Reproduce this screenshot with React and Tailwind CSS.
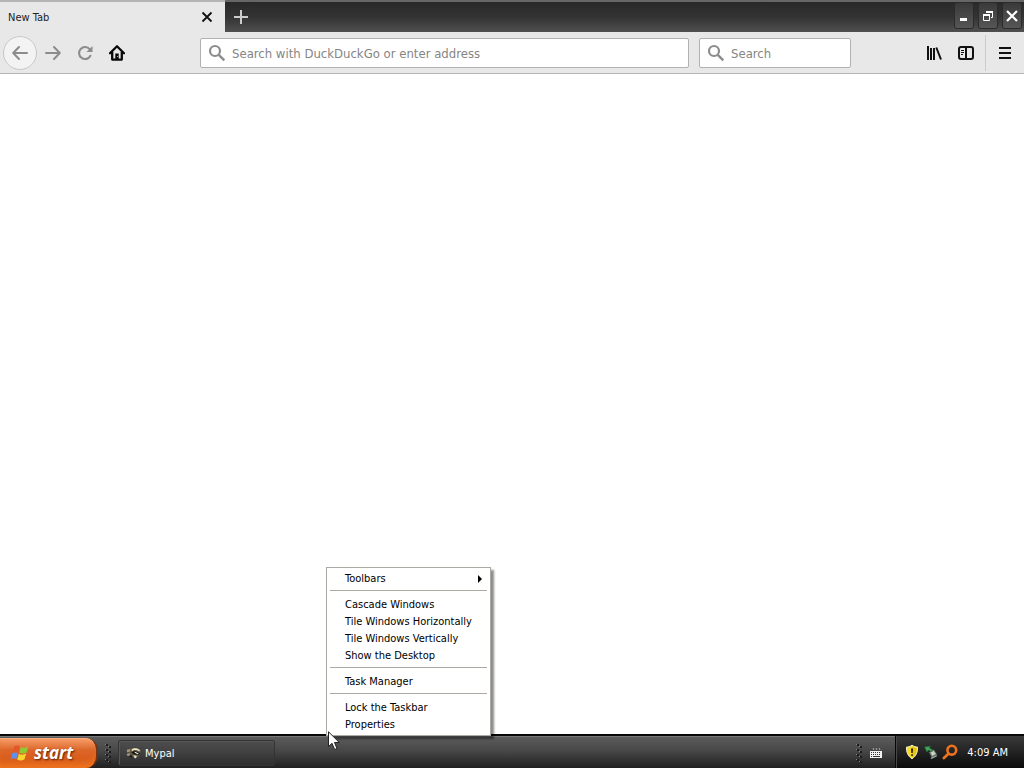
import React from "react";

const ui = "font-['DejaVu_Sans_Condensed','DejaVu_Sans',sans-serif]";

function SearchIcon() {
  return (
    <svg className="h-[18px] w-[18px] shrink-0" viewBox="0 0 18 18" fill="none" stroke="#8c8c8c" aria-hidden="true">
      <circle cx="7" cy="7" r="5" strokeWidth="2.2" />
      <path d="M10.8 10.8L16.3 16.3" strokeWidth="2.4" />
    </svg>
  );
}

function TabStrip() {
  const winBtn =
    "flex h-[27px] w-5 items-center justify-center rounded-[3px] border border-[#2c2c2c] bg-linear-to-b from-[#3a3a3a] to-[#565656]";
  return (
    <header className="flex h-8 items-stretch border-t-2 border-[#666] bg-linear-to-b from-[#292929] via-[#333] to-[#505050]">
      <div className="-mt-0.5 flex w-[225px] items-center justify-between border-t-2 border-[#b4b4b4] bg-[#e8e8e8] pl-2 pr-2.5">
        <span className="pt-0.5 text-[11px] text-[#222]">New Tab</span>
        <button type="button" aria-label="Close tab" className="flex h-4 w-4 items-center justify-center">
          <svg className="h-3 w-3" viewBox="0 0 12 12" stroke="#111" strokeWidth="1.8" aria-hidden="true">
            <path d="M1.5 1.5L10.5 10.5M10.5 1.5L1.5 10.5" />
          </svg>
        </button>
      </div>
      <button type="button" aria-label="New tab" className="flex w-8 items-center justify-center">
        <svg className="h-4 w-4" viewBox="0 0 16 16" stroke="#ccc" strokeWidth="2" aria-hidden="true">
          <path d="M8 1V15M1 8H15" />
        </svg>
      </button>
      <div className="ml-auto flex items-start gap-1 pr-0.5">
        <button type="button" aria-label="Minimize" className={winBtn}>
          <svg className="h-4 w-4 shrink-0" viewBox="0 0 16 16" aria-hidden="true">
            <path d="M4 10H11V13H4Z" fill="#fff" />
          </svg>
        </button>
        <button type="button" aria-label="Restore" className={winBtn}>
          <svg className="h-4 w-4 shrink-0" viewBox="0 0 16 16" fill="none" stroke="#fff" aria-hidden="true">
            <path d="M3.5 6.5H9.5V12.5H3.5ZM6.5 5V3.5H12.5V9.5H11" />
            <path d="M3 7H10M6 4H13" strokeWidth="2" />
          </svg>
        </button>
        <button type="button" aria-label="Close" className={winBtn}>
          <svg className="h-4 w-4 shrink-0" viewBox="0 0 16 16" stroke="#fff" strokeWidth="2.2" aria-hidden="true">
            <path d="M3 3L13 13M13 3L3 13" />
          </svg>
        </button>
      </div>
    </header>
  );
}

function Toolbar() {
  const btn = "flex h-8 w-8 shrink-0 items-center justify-center";
  const field = "flex h-[30px] items-center gap-1.5 rounded-[2px] border border-[#b1b1b1] bg-white pl-[7px]";
  const input = "min-w-0 flex-1 bg-transparent pt-0.5 text-[13px] text-[#444] outline-none placeholder:text-[#858585]";
  return (
    <nav className="flex h-[42px] items-center border-b border-[#b5b5b5] bg-[#e8e8e8] pl-[3px]">
      <button
        type="button"
        aria-label="Back"
        className="flex h-[34px] w-[34px] shrink-0 items-center justify-center rounded-full border border-[#c8c8c8] bg-[#f3f3f3]"
      >
        <svg className="h-4 w-4 shrink-0" viewBox="0 0 16 16" fill="none" stroke="#8c8c8c" strokeWidth="2" strokeLinecap="round" strokeLinejoin="round" aria-hidden="true">
          <path d="M15 8H1.5M7 2L1.2 8L7 14" />
        </svg>
      </button>
      <button type="button" aria-label="Forward" className={btn}>
        <svg className="h-4 w-4" viewBox="0 0 16 16" fill="none" stroke="#8c8c8c" strokeWidth="2" strokeLinecap="round" strokeLinejoin="round" aria-hidden="true">
          <path d="M1 8H14.5M9 2L14.8 8L9 14" />
        </svg>
      </button>
      <button type="button" aria-label="Reload" className={btn}>
        <svg className="h-4 w-4" viewBox="0 0 16 16" fill="none" aria-hidden="true">
          <path d="M12.7 4.2A6 6 0 1 0 13.4 10.8" stroke="#8c8c8c" strokeWidth="2.1" strokeLinecap="round" />
          <path d="M15.5 1V7H9.5Z" fill="#8c8c8c" />
        </svg>
      </button>
      <button type="button" aria-label="Home" className={btn}>
        <svg className="h-4 w-4" viewBox="0 0 16 16" fill="none" stroke="#080808" aria-hidden="true">
          <path d="M1 8.3L8 1.3L15 8.3" strokeWidth="2.3" strokeLinecap="round" strokeLinejoin="round" />
          <path d="M3.2 7V14.6H12.8V7" strokeWidth="2.3" strokeLinejoin="round" />
          <path d="M6.3 14V8.5H9.7V14Z" fill="#080808" stroke="none" />
          <path d="M8.2 11H9V12H8.2Z" fill="#ddd" stroke="none" />
        </svg>
      </button>
      <div className="mx-[67px] flex flex-1 gap-2.5">
        <div className={field + " flex-1"}>
          <SearchIcon />
          <input aria-label="Address" className={input} placeholder="Search with DuckDuckGo or enter address" />
        </div>
        <div className={field + " w-[152px]"}>
          <SearchIcon />
          <input aria-label="Search" className={input} placeholder="Search" />
        </div>
      </div>
      <button type="button" aria-label="Library" className={btn}>
        <svg className="h-4 w-4" viewBox="0 0 16 16" stroke="#111" strokeWidth="2" aria-hidden="true">
          <path d="M2 1V15M5 3V15M8 3V15M10.3 2.5L15 14.5" />
        </svg>
      </button>
      <button type="button" aria-label="Sidebar" className={btn}>
        <svg className="h-4 w-4" viewBox="0 0 16 16" fill="none" stroke="#111" aria-hidden="true">
          <rect x="1" y="2" width="14" height="12" rx="2" strokeWidth="2" />
          <path d="M8 2V14" strokeWidth="2" />
          <path d="M3 5.5H6M3 7.5H6M3 9.5H5" strokeWidth="1" />
        </svg>
      </button>
      <div className="ml-[3px] flex border-l border-[#cbcbcb] py-0.5 pl-[3px] pr-[3px]">
        <button type="button" aria-label="Open menu" className={btn}>
          <svg className="h-4 w-4" viewBox="0 0 16 16" stroke="#111" strokeWidth="2" aria-hidden="true">
            <path d="M2 3H14M2 8H14M2 13H14" />
          </svg>
        </button>
      </div>
    </nav>
  );
}

const groups = [
  ["Toolbars"],
  ["Cascade Windows", "Tile Windows Horizontally", "Tile Windows Vertically", "Show the Desktop"],
  ["Task Manager"],
  ["Lock the Taskbar", "Properties"],
];

function ContextMenu() {
  return (
    <div
      role="menu"
      className="absolute bottom-8 left-[326px] w-[165px] border border-[#aca8a4] bg-white p-0.5 shadow-[3px_3px_2px_rgba(0,0,0,0.45)]"
    >
      {groups.map((items, i) => (
        <div key={items[0]}>
          {i > 0 && <div role="separator" className="mx-px mt-[3px] mb-[5px] h-px bg-[#aca8a4]" />}
          {items.map((label) => (
            <button
              key={label}
              type="button"
              role="menuitem"
              className="flex h-[17px] w-full items-center justify-between whitespace-nowrap pl-4 pr-1.5 text-[11px] text-black"
            >
              <span className="pt-0.5">{label}</span>
              {label === "Toolbars" && (
                <svg className="h-2 w-1" viewBox="0 0 4 8" aria-hidden="true">
                  <path d="M0 0L4 4L0 8Z" fill="#000" />
                </svg>
              )}
            </button>
          ))}
        </div>
      ))}
    </div>
  );
}

function Cursor() {
  return (
    <svg className="absolute bottom-[17px] left-[328px] h-5 w-3" viewBox="0 0 12 20" aria-hidden="true">
      <path d="M0.5 0.8V15.5L4 12.3L6.6 18.5L9 17.5L6.5 11.5H11.3Z" fill="#fff" stroke="#222" />
    </svg>
  );
}

function Grip() {
  return (
    <svg className="h-6 w-2 shrink-0" viewBox="0 0 8 24" aria-hidden="true">
      {[3, 8, 13, 18].map((y) => (
        <g key={y}>
          <path d={`M2 ${y}h2v2h-2zM5 ${y + 2}h2v2h-2z`} fill="#1c1c1c" />
          <path d={`M1 ${y}h1v1h-1zM4 ${y + 2}h1v1h-1z`} fill="#858585" />
        </g>
      ))}
    </svg>
  );
}

function Flag() {
  return (
    <svg className="h-[18px] w-5 shrink-0" viewBox="0 0 20 18" aria-hidden="true">
      <path d="M4.2 2.4C6 1.1 8 1.3 9.8 2.5L8.1 8.4C6.3 7.2 4.4 7.3 2.6 8.3Z" fill="#e4562c" />
      <path d="M10.8 3C12.8 4.2 15 4.1 18.3 2.5L16.5 8.4C14 9.9 11.4 9.8 9.2 8.8Z" fill="#8ccb35" />
      <path d="M2.3 9.2C4.2 8.2 6.2 8.2 7.9 9.4L6.2 15.2C4.2 14.1 2.3 14.1 0.5 15.1Z" fill="#5f8ff0" />
      <path d="M8.9 9.8C11.1 11.1 13.8 10.9 16.2 9.5L14.5 15.3C11.9 16.9 9.4 16.7 7.2 15.6Z" fill="#f6d52f" />
    </svg>
  );
}

function Tray() {
  return (
    <div className="flex items-center gap-[3px] border-l border-[#070707] bg-linear-to-b from-[#3a3a3a] from-0% via-[#222] via-50% to-[#0b0b0b] pl-2 pr-4 shadow-[inset_1px_0_#484848]">
      <svg className="h-4 w-4" viewBox="0 0 16 16" aria-label="Security alert" role="img">
        <path d="M8 1.2C10 2.5 11.5 3 13.5 3.1C13.8 8 12.2 12 8 14.8C3.8 12 2.2 8 2.5 3.1C4.5 3 6 2.5 8 1.2Z" fill="#f7dc2b" stroke="#f6f1cf" />
        <path d="M8 2.4V13.8C11.5 11.2 12.8 7.8 12.8 4C11 3.8 9.5 3.4 8 2.4Z" fill="#d9a900" opacity="0.5" />
        <path d="M7 4.4H9L8.7 9H7.3ZM7.2 10.3H8.8V12H7.2Z" fill="#252000" />
      </svg>
      <svg className="h-4 w-4" viewBox="0 0 16 16" aria-label="Safely remove hardware" role="img">
        <path d="M5.5 8L11 5L14.5 10.5L8.5 13.8Z" fill="#788377" stroke="#222c25" />
        <path d="M7.7 8.5L10.6 6.9L12.6 10L9.3 11.8Z" fill="#ccd5cb" />
        <path d="M1.5 3L7.5 2.2L6.5 4L9.8 6L8.4 7.6L5.2 6L4 8Z" fill="#42a55a" stroke="#216436" strokeWidth="0.6" />
        <path d="M7.5 14L13.5 11L14 12.3L8.5 15Z" fill="#a7b0a9" />
      </svg>
      <svg className="h-4 w-4" viewBox="0 0 16 16" fill="none" aria-label="Search" role="img">
        <circle cx="9.8" cy="6.2" r="4.4" stroke="#ef731e" strokeWidth="2.6" />
        <path d="M6.4 9.8L1.9 14" stroke="#ef731e" strokeWidth="2.8" strokeLinecap="round" />
      </svg>
      <time className="ml-1.5 whitespace-nowrap pt-0.5 text-[11px] text-white">4:09 AM</time>
    </div>
  );
}

function Taskbar() {
  return (
    <footer className="flex h-[34px] items-stretch border-t-2 border-[#080808] bg-linear-to-b from-[#5e5e5e] via-[#454545] via-50% to-[#202020] pt-0.5 shadow-[inset_0_1px_#777]">
      <button
        type="button"
        className="flex w-[98px] items-center gap-1 rounded-r-xl border-r-2 border-[#78320f] bg-linear-to-b from-[#f9a06b] from-0% via-[#dc6629] via-40% to-[#d45308] pl-2.5 shadow-[inset_0_1px_#ffae7b,inset_0_-8px_6px_-3px_#ee7522]"
      >
        <Flag />
        <span className="font-['Open_Sans','Noto_Sans',sans-serif] text-[17px] font-bold italic leading-5 text-white [text-shadow:1px_1px_2px_#5a2105]">
          start
        </span>
      </button>
      <div className="flex items-center px-1.5">
        <Grip />
      </div>
      <button
        type="button"
        className="mt-0.5 mb-0.5 flex w-[157px] items-center gap-[3px] rounded-[2px] border border-[#343434] bg-linear-to-b from-[#4e4e4e] via-[#404040] to-[#2e2e2e] pl-[7px] text-[11px] text-white shadow-[inset_1px_1px_#565656]"
      >
        <svg className="h-4 w-4" viewBox="0 0 16 16" aria-hidden="true">
          <path d="M1.5 6.5C3 3 8.5 1.5 12.5 4.5L15 5.5L13.5 10.5C11 13.5 7.5 13 5 10Z" fill="#5d5647" />
          <path d="M0.8 4.8L4 4L4.2 6.5L1 7.5ZM0.5 9L3.5 8L4.2 10L1.8 11.3Z" fill="#a59673" />
          <path d="M5.5 4.6C8 2.4 11.3 3 14 5L13.4 6.4C10.5 4.6 7.8 4.8 6 6.2Z" fill="#eee4c4" />
          <path d="M5.5 7.6L8.6 5.8L14.2 8.2L13 9.8L8.3 9.4Z" fill="#11120f" />
          <path d="M8.6 6.6L12.8 8.6L11.6 9.2L8.6 7.8Z" fill="#f0e8cf" />
          <path d="M7.5 10.2L10.8 10.7L10 13.4L8 12.4Z" fill="#e1d9ba" />
          <path d="M3 12L5.5 10.3L6.3 12.4Z" fill="#16160f" />
        </svg>
        <span className="pt-0.5">Mypal</span>
      </button>
      <div className="ml-auto flex items-center gap-[5px] pr-[11px]">
        <Grip />
        <button type="button" aria-label="Keyboard layout" className="flex h-4 w-4 items-center justify-center">
          <svg className="h-4 w-4 shrink-0" viewBox="0 0 16 16" aria-hidden="true">
            <path d="M5 3L6 5M8 3L9 5M11 3L12 5" stroke="#aaa" />
            <path d="M2 6H14V13H2Z" fill="#f2f2f2" />
            <path d="M3 7.5H13M3 9.5H13M3 11.5H13" stroke="#333" strokeDasharray="1 1" />
            <path d="M5 11.5H11" stroke="#333" />
          </svg>
        </button>
      </div>
      <div className="-mt-0.5 flex">
        <Tray />
      </div>
    </footer>
  );
}

export default function App() {
  return (
    <div className={"relative flex min-h-screen flex-col bg-white " + ui}>
      <TabStrip />
      <Toolbar />
      <main className="flex-1 bg-white" />
      <Taskbar />
      <ContextMenu />
      <Cursor />
    </div>
  );
}
